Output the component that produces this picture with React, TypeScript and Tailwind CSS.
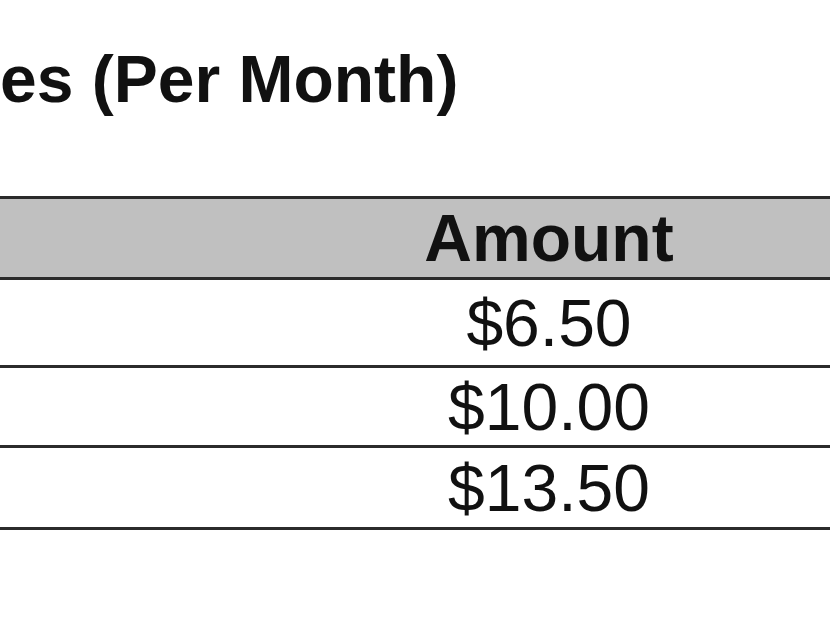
const rows = ["$6.50", "$10.00", "$13.50"]

const App = () => {
	return (
		<div className="w-[830px] h-[622px] bg-white overflow-hidden text-[#111]" style={{ fontFamily: '"Liberation Sans", Arial, sans-serif' }}>
			<h1 className="mt-[46px] text-[66px] leading-none font-bold whitespace-nowrap">es (Per Month)</h1>
			<div className="mt-[84px] border-t-[3px] border-[#2b2b2b]">
				<div className="grid grid-cols-[268px_1fr] h-[78px] bg-[#c0c0c0] items-center">
					<div />
					<div className="text-center text-[66px] leading-none font-bold">Amount</div>
				</div>
				{rows.map((amount, i) => (
					<div
						key={amount}
						className={`grid grid-cols-[268px_1fr] items-center border-t-[3px] border-[#2b2b2b] ${i === 0 ? "h-[88px]" : i === 1 ? "h-[80px]" : "h-[82px]"}`}
					>
						<div />
						<div className="text-center text-[66px] leading-none">{amount}</div>
					</div>
				))}
				<div className="border-t-[3px] border-[#2b2b2b]" />
			</div>
		</div>
	)
}

export default App
